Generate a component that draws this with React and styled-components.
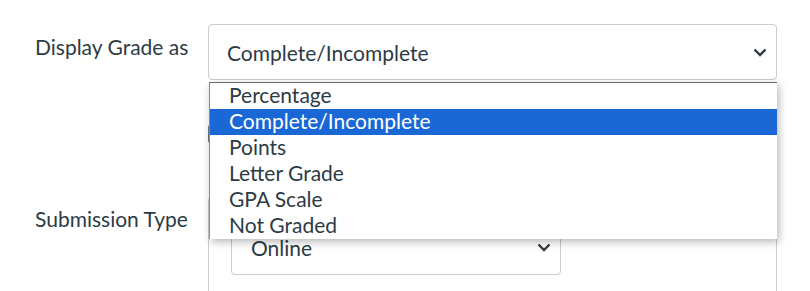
import React from "react"
import styled, { createGlobalStyle } from "styled-components"

const GlobalStyle = createGlobalStyle`
  html, body {
    margin: 0;
    padding: 0;
    background: #fff;
  }
  body {
    font-family: Lato, "Noto Sans", sans-serif;
    color: #2d3b45;
    overflow: hidden;
  }
`

const options = ["Percentage", "Complete/Incomplete", "Points", "Letter Grade", "GPA Scale", "Not Graded"]

const Page = styled.div`
  width: 810px;
  height: 291px;
  padding-top: 24px;
  box-sizing: border-box;
  display: flex;
  flex-direction: column;
  gap: 117px;
`

const Row = styled.div`
  display: grid;
  grid-template-columns: 208px 569px;
  align-items: start;
`

const Label = styled.div`
  padding-left: 35px;
  padding-top: ${({ $top }) => $top}px;
  font-size: 21px;
  line-height: 24px;
  color: #2d3b45;
`

const SelectWrap = styled.div`
  position: relative;
`

const SelectBox = styled.div`
  height: 56px;
  width: ${({ $width }) => $width};
  box-sizing: border-box;
  border: 1px solid #c7cdd1;
  border-radius: 4px;
  background: #fff;
  display: flex;
  align-items: center;
  justify-content: space-between;
  padding: 0 ${({ $right }) => $right}px 0 ${({ $pad }) => $pad}px;
  font-size: 21px;
  color: #2d3b45;
`

const Chevron = () => (
  <svg width="14" height="9" viewBox="0 0 14 9">
    <polyline points="1.5,1.5 7,7 12.5,1.5" fill="none" stroke="#2d3b45" strokeWidth="2.4" />
  </svg>
)

const Menu = styled.ul`
  position: absolute;
  top: 58px;
  left: 1px;
  right: 0;
  margin: 0;
  padding: 0;
  list-style: none;
  background: #fff;
  border-top: 1px solid #6b6b6b;
  border-left: 1px solid #8a8a8a;
  box-shadow: 2px 3px 8px rgba(0, 0, 0, 0.28);
  z-index: 5;
`

const Option = styled.li`
  height: 26px;
  line-height: 24px;
  padding-left: 19px;
  font-size: 21px;
  color: ${({ $active }) => ($active ? "#fff" : "#2d3b45")};
  background: ${({ $active }) => ($active ? "#1a68d6" : "transparent")};
`

const Hidden = styled.div`
  position: absolute;
  top: 101px;
  left: 0;
  width: 4px;
  height: 18px;
  border-radius: 2px;
  background: #6b7780;
`

const Group = styled.div`
  height: 100px;
  border: 1px solid #c7cdd1;
  border-bottom: none;
  border-radius: 4px 4px 0 0;
  padding: 21px 0 0 22px;
  box-sizing: border-box;
`

export default function App() {
  return (
    <>
      <GlobalStyle />
      <Page>
        <Row>
          <Label $top={11}>Display Grade as</Label>
          <SelectWrap>
            <SelectBox $width="569px" $pad={18} $right={9}>
              <span>Complete/Incomplete</span>
              <Chevron />
            </SelectBox>
            <Hidden />
            <Menu>
              {options.map((o) => (
                <Option key={o} $active={o === "Complete/Incomplete"}>{o}</Option>
              ))}
            </Menu>
          </SelectWrap>
        </Row>
        <Row>
          <Label $top={10}>Submission Type</Label>
          <Group>
            <SelectBox $width="330px" $pad={19} $right={9}>
              <span>Online</span>
              <Chevron />
            </SelectBox>
          </Group>
        </Row>
      </Page>
    </>
  )
}
